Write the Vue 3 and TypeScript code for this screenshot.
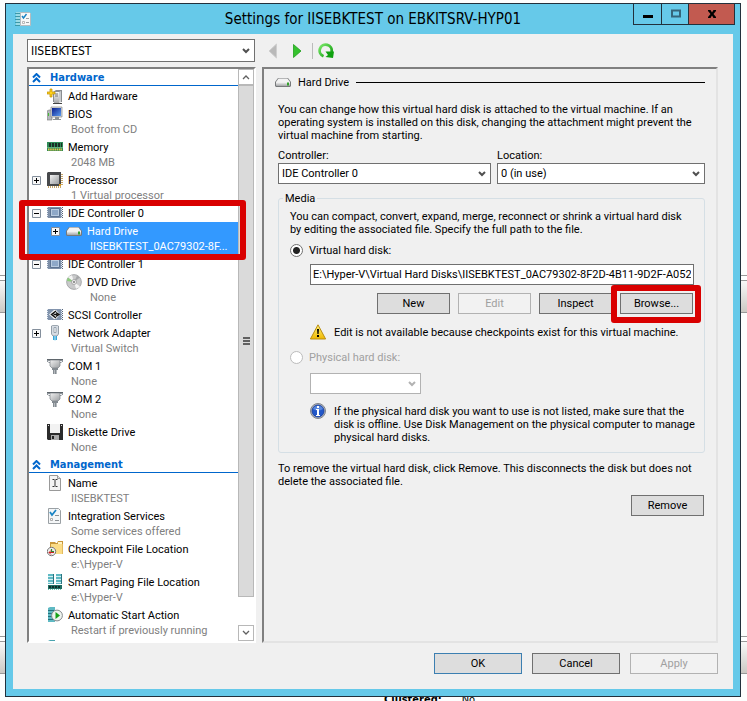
<script setup lang="ts">
import { ref } from 'vue'

interface Item {
  icon: string
  label: string
  note?: string
  expander?: 'plus' | 'minus'
  nested?: boolean
  selected?: boolean
}

interface Section {
  title: string
  items: Item[]
}

const sections: Section[] = [
  {
    title: 'Hardware',
    items: [
      { icon: 'add', label: 'Add Hardware' },
      { icon: 'bios', label: 'BIOS', note: 'Boot from CD' },
      { icon: 'memory', label: 'Memory', note: '2048 MB' },
      { icon: 'cpu', label: 'Processor', note: '1 Virtual processor', expander: 'plus' },
      { icon: 'ide', label: 'IDE Controller 0', expander: 'minus' },
      { icon: 'drive', label: 'Hard Drive', note: 'IISEBKTEST_0AC79302-8F...', expander: 'plus', nested: true, selected: true },
      { icon: 'ide', label: 'IDE Controller 1', expander: 'minus' },
      { icon: 'dvd', label: 'DVD Drive', note: 'None', nested: true },
      { icon: 'scsi', label: 'SCSI Controller' },
      { icon: 'net', label: 'Network Adapter', note: 'Virtual Switch', expander: 'plus' },
      { icon: 'com', label: 'COM 1', note: 'None' },
      { icon: 'com', label: 'COM 2', note: 'None' },
      { icon: 'floppy', label: 'Diskette Drive', note: 'None' },
    ],
  },
  {
    title: 'Management',
    items: [
      { icon: 'name', label: 'Name', note: 'IISEBKTEST' },
      { icon: 'services', label: 'Integration Services', note: 'Some services offered' },
      { icon: 'checkpoint', label: 'Checkpoint File Location', note: 'e:\\Hyper-V' },
      { icon: 'paging', label: 'Smart Paging File Location', note: 'e:\\Hyper-V' },
      { icon: 'start', label: 'Automatic Start Action', note: 'Restart if previously running' },
      { icon: 'stop', label: '' },
    ],
  },
]

const machine = ref('IISEBKTEST')
const controller = ref('IDE Controller 0')
const location = ref('0 (in use)')
const media = ref('virtual')
const path = ref('E:\\Hyper-V\\Virtual Hard Disks\\IISEBKTEST_0AC79302-8F2D-4B11-9D2F-A0521D')
</script>

<template>
  <svg class="sprite" aria-hidden="true">
    <defs>
      <linearGradient id="g-metal" x1="0" y1="0" x2="1" y2="1">
        <stop offset="0" stop-color="#f2f2f2" /><stop offset="1" stop-color="#9a9da0" />
      </linearGradient>
      <linearGradient id="g-down" x1="0" y1="0" x2="0" y2="1">
        <stop offset="0" stop-color="#fafafa" /><stop offset="1" stop-color="#a4a6a8" />
      </linearGradient>
      <linearGradient id="g-green" x1="0" y1="0" x2="1" y2="1">
        <stop offset="0" stop-color="#7be86a" /><stop offset="1" stop-color="#0b9a0b" />
      </linearGradient>
      <linearGradient id="g-blue" x1="0" y1="0" x2="1" y2="1">
        <stop offset="0" stop-color="#0a1d8c" /><stop offset="1" stop-color="#5b9cf0" />
      </linearGradient>
      <linearGradient id="g-yellow" x1="0" y1="0" x2="0" y2="1">
        <stop offset="0" stop-color="#fff27a" /><stop offset="1" stop-color="#f0b800" />
      </linearGradient>
    </defs>
    <symbol id="i-add" viewBox="0 0 16 16">
      <path d="M6 4l3-2h6v12H6z" fill="#8a8d90" /><path d="M7 4h5v11H7z" fill="url(#g-down)" /><path d="M12 4l2-1v11l-2 1z" fill="#c9ccce" />
      <path d="M8 6h3M8 8h3" stroke="#777" /><path d="M6 15.500h9" stroke="#444" />
      <path d="M3 1h2v3h3v2H5v3H3V6H0V4h3z" fill="#ffd21c" stroke="#b98a00" stroke-width=".7" />
    </symbol>
    <symbol id="i-bios" viewBox="0 0 16 16">
      <path d="M0 5l2-1h3v10H0z" fill="#b4b8bb" stroke="#777" stroke-width=".6" /><path d="M1.500 7v3" stroke="#44bb33" />
      <path d="M4 1h11v10H4z" fill="#d9dde0" stroke="#888" stroke-width=".7" /><path d="M5 2h9v8H5z" fill="url(#g-blue)" />
      <path d="M8 11h4v2h2v1H6v-1h2z" fill="#8c9194" />
    </symbol>
    <symbol id="i-memory" viewBox="0 0 16 16">
      <path d="M0 3h16v9H0z" fill="#2e8b57" /><path d="M2 4h2v4H2zM5 4h2v4H5zM8 4h2v4H8zM11 4h2v4h-2zM14 4h1v4h-1z" fill="#1b2e26" />
      <path d="M1 10.500h14" stroke="#e8c34a" stroke-width="2" stroke-dasharray="1.500 .7" /><path d="M0 8.500h16" stroke="#5fb07c" />
    </symbol>
    <symbol id="i-cpu" viewBox="0 0 16 16">
      <path d="M0 1l1-1h13v13l-1 1H0z" fill="#47494c" /><path d="M3 3h9v9H3z" fill="url(#g-metal)" />
      <path d="M15 2v12M1 15h13" stroke="#b58b3a" stroke-width="1.500" stroke-dasharray="1 1" /><path d="M12 12h2v2h-2z" fill="#d99a1e" />
    </symbol>
    <symbol id="i-ide" viewBox="0 0 16 16">
      <path d="M0 2h15v11H0z" fill="#7d8fa8" /><path d="M.5 2v11M14.500 2v11" stroke="#e4eaf2" stroke-dasharray="1 1" />
      <path d="M15.500 2v11" stroke="#55647a" stroke-dasharray="1 1" />
      <path d="M3.500 3.500h9v8h-9z" fill="#b9cbe0" stroke="#5c7392" /><path d="M5 5h6v5H5z" fill="#8ea8c8" />
    </symbol>
    <symbol id="i-drive" viewBox="0 0 16 16">
      <path d="M3 4h10l3 4v4l-1 1H1l-1-1V8z" fill="#77797b" /><path d="M3.500 4.500h9L15 8H1z" fill="#f3f3f3" />
      <path d="M1 8h14v3.500l-.6.500H1.600L1 11.500z" fill="url(#g-down)" /><path d="M12 8.500h2v3h-2z" fill="#33a12c" />
    </symbol>
    <symbol id="i-dvd" viewBox="0 0 16 16">
      <circle cx="8" cy="8" r="7.400" fill="#c9cacb" stroke="#929496" stroke-width=".7" />
      <path d="M8 8L2 3.500A7 7 0 0 1 6 1.200z" fill="#f4f4f4" /><path d="M8 8l6 4.500a7 7 0 0 1-4 2.300z" fill="#f4f4f4" />
      <path d="M8 8L1 7a7 7 0 0 1 1-3.500z" fill="#8ecb7f" /><path d="M8 8l3-6.200a7 7 0 0 1 2.600 2z" fill="#a4a6a8" />
      <circle cx="8" cy="8" r="2.500" fill="#eee" stroke="#888" stroke-width=".6" /><circle cx="8" cy="8" r="1" fill="#777" />
    </symbol>
    <symbol id="i-scsi" viewBox="0 0 16 16">
      <path d="M0 2h15v11H0z" fill="#8294ad" /><path d="M.5 2v11M14.500 2v11" stroke="#e4eaf2" stroke-dasharray="1 1" /><path d="M15.500 2v11" stroke="#55647a" stroke-dasharray="1 1" />
      <path d="M2 7.500L7 3h2l4 4.500L9 12H7z" fill="#f4f6f8" /><path d="M9 4L4.500 7.500 9 11M9 5.500L12 7.500 9 9.500M6.500 7.500h4" fill="none" stroke="#111" stroke-width="1.400" />
    </symbol>
    <symbol id="i-net" viewBox="0 0 16 16">
      <path d="M4.500 1l1-.6h5l1 .6v8l-1.500 2H6L4.500 9z" fill="#d7dde4" stroke="#7e8a96" stroke-width=".8" /><path d="M7 2.500h2v5H7z" fill="#fff" stroke="#8794a1" stroke-width=".8" />
      <path d="M6 11h4v4H6z" fill="#38a5d8" /><path d="M8 11v5" stroke="#bfe8f8" />
    </symbol>
    <symbol id="i-com" viewBox="0 0 16 16">
      <path d="M0 1h16v3h-1l-1 1H2L1 4H0z" fill="#8f969c" /><path d="M3 2h10v6l-2 2H5L3 8z" fill="url(#g-metal)" stroke="#7b8288" stroke-width=".7" />
      <path d="M0 1.500h16" stroke="#5f666c" /><path d="M1 3h2v1H1zM13 3h2v1h-2z" fill="#e8eaec" />
      <path d="M5 10h6v2H5z" fill="#838a90" /><path d="M6 12h4v4H6z" fill="#b5babe" /><path d="M6.500 12v4M8.500 12v4" stroke="#858c92" />
    </symbol>
    <symbol id="i-floppy" viewBox="0 0 16 16">
      <path d="M0 0h16v16H1l-1-1z" fill="#2b2b2b" /><path d="M3 0h10v9H3z" fill="#f2f2f2" /><path d="M4 11h8v5H4z" fill="#a9a9a9" /><path d="M5 12h2v3H5z" fill="#222" />
      <path d="M1 1h1v1H1zM14 1h1v1h-1z" fill="#ddd" />
    </symbol>
    <symbol id="i-name" viewBox="0 0 16 16">
      <path d="M2.500.5h8l3 3v12h-11z" fill="#f4f4f4" stroke="#999" /><path d="M10.500.5v3h3" fill="#ddd" stroke="#999" />
      <path d="M5.500 4.500h2m1 0h2M5.500 11.500h2m1 0h2M8 5v6" stroke="#333" />
    </symbol>
    <symbol id="i-services" viewBox="0 0 16 16">
      <path d="M1.500.5h10l2 2v13h-12z" fill="#f4f6f7" stroke="#9aa0a4" /><path d="M3 4l2 3 4-5" fill="none" stroke="#1783c4" stroke-width="1.700" />
      <path d="M8 7.500h4M8 12.500h4" stroke="#8b9094" /><path d="M3.500 10.500h2v2h-2z" fill="#fff" stroke="#999" stroke-width=".8" />
    </symbol>
    <symbol id="i-checkpoint" viewBox="0 0 16 16">
      <path d="M3 1h5l1 1h1l1-2h5v13H3z" fill="#c9973a" /><path d="M4 3h11.500v10H4z" fill="#fbdc86" /><path d="M11 1h4v2h-4z" fill="#fff3c4" />
      <circle cx="4.500" cy="10.500" r="4.200" fill="#ededed" stroke="#777" /><path d="M4.500 8v2.500H7" fill="none" stroke="#2d8a2d" stroke-width="1.200" /><path d="M2 11.500h5M4 9.500l-2 2 2 2" fill="none" stroke="#c22" />
    </symbol>
    <symbol id="i-paging" viewBox="0 0 16 16">
      <path d="M1 0h5v10H1zM9 0h5v10H9z" fill="#5fb9c3" /><path d="M1 2.500h5M1 5.500h5M1 8.500h5M9 2.500h5M9 5.500h5M9 8.500h5" stroke="#d5f1f4" />
      <path d="M6.500 0v10M14.500 0v10" stroke="#2b7480" /><path d="M1 11h14v4H1z" fill="#1f6d62" /><path d="M2 13h12" stroke="#0d2e2a" stroke-width="2" stroke-dasharray="2 1" /><path d="M1 15.500h14" stroke="#72c8b8" stroke-dasharray="1 1" />
    </symbol>
    <symbol id="i-start" viewBox="0 0 16 16">
      <path d="M1 1l2-1h5v15H1z" fill="#5fb9c3" /><path d="M1 3.500h6M1 6.500h6M1 9.500h6M1 12.500h6" stroke="#24717c" />
      <circle cx="10" cy="8.500" r="5.400" fill="#eef3ee" stroke="#84898c" /><path d="M8.500 5l4.500 3.500L8.500 12z" fill="#16a016" />
    </symbol>
    <symbol id="i-stop" viewBox="0 0 16 16">
      <path d="M1 1l2-1h5v15H1z" fill="#4aa3af" /><path d="M1 3.500h6" stroke="#24717c" />
    </symbol>
  </svg>

  <div class="desktop">
    <div class="backdrop" aria-hidden="true">
      <div class="band"></div>
      <div class="band"></div>
      <div class="under"><b>Clustered:</b><span>No</span></div>
    </div>

    <main class="window">
      <header class="titlebar">
        <svg class="app-icon" viewBox="0 0 16 16">
          <path d="M1 1h5v14H1z" fill="#9adbe6" /><path d="M0 2.500h5M0 5.500h5M0 8.500h5M0 11.500h5M0 14.500h5" stroke="#3c98a8" />
          <path d="M5.500 1.500h9l1 1v12h-10z" fill="#f7f8f8" stroke="#b5bcc0" /><path d="M7 5l1.500 2 3-4" fill="none" stroke="#1783c4" stroke-width="1.400" />
          <path d="M11 7.500h3M11 11.500h3" stroke="#9aa0a4" /><path d="M7.500 10.500h2v2h-2z" fill="#fff" stroke="#aaa" stroke-width=".8" />
        </svg>
        <h1>Settings for IISEBKTEST on EBKITSRV-HYP01</h1>
        <div class="caption">
          <button type="button" class="cap" aria-label="Minimize"><svg viewBox="0 0 10 10"><path d="M0 6h10v3H0z" fill="#000" /></svg></button>
          <button type="button" class="cap" aria-label="Maximize"><svg viewBox="0 0 10 10"><path d="M1 1.500h8v6H1z" fill="none" stroke="#35657a" stroke-width="2" /></svg></button>
          <button type="button" class="cap close" aria-label="Close"><svg viewBox="0 0 10 10"><path d="M1 1h2.500L5 3.500 6.500 1H9v1L6.500 5 9 8v1H6.500L5 6.500 3.500 9H1V8l2.500-3L1 2z" fill="#000" /></svg></button>
        </div>
      </header>

      <div class="client">
        <div class="toolbar">
          <div class="combo machine">
            <select v-model="machine" aria-label="Virtual machine"><option>IISEBKTEST</option></select>
            <svg viewBox="0 0 8 6"><path d="M1 1l3 3 3-3" /></svg>
          </div>
          <button type="button" class="tool" aria-label="Back" disabled><svg viewBox="0 0 16 16"><path d="M11.500 1v14L4 8z" fill="#b9b9b9" stroke="#cfcfcf" /></svg></button>
          <button type="button" class="tool" aria-label="Forward"><svg viewBox="0 0 16 16"><path d="M4.500 1.500v13L12 8z" fill="#35c22d" stroke="#1f9e1c" stroke-width=".8" /></svg></button>
          <span class="split"></span>
          <button type="button" class="tool" aria-label="Refresh"><svg viewBox="0 0 16 16"><path d="M5.500 13.200A6 6 0 1 1 13.500 9" fill="none" stroke="url(#g-green)" stroke-width="2.800" /><path d="M7.500 8.500h8.500l-1 6.500-7.500-1 2.500-2z" fill="#0fa10f" /></svg></button>
        </div>

        <div class="columns">
          <aside class="sidebar">
            <div class="tree">
              <div class="list">
                <section v-for="s in sections" :key="s.title">
                  <h2>
                    <svg viewBox="0 0 9 10"><path d="M1 4.500L4.500 1 8 4.500M1 9l3.500-3.500L8 9" /></svg>
                    {{ s.title }}
                  </h2>
                  <ul>
                    <li v-for="i in s.items" :key="i.label" :class="{ nested: i.nested, selected: i.selected }">
                      <div class="row">
                        <span class="slot">
                          <svg v-if="i.expander" class="exp" viewBox="0 0 9 9">
                            <path d="M.5.5h8v8h-8z" fill="#f8f8f8" stroke="#848f9c" />
                            <path :d="i.expander === 'plus' ? 'M2 4.500h5M4.500 2v5' : 'M2 4.500h5'" stroke="#000" />
                          </svg>
                        </span>
                        <svg class="ico"><use :href="'#i-' + i.icon" /></svg>
                        <span>{{ i.label }}</span>
                      </div>
                      <div v-if="i.note" class="note">{{ i.note }}</div>
                    </li>
                  </ul>
                </section>
              </div>
              <div class="scroll" aria-hidden="true">
                <div class="arrow"><svg viewBox="0 0 8 6"><path d="M1 5l3-3 3 3" /></svg></div>
                <div class="thumb"><i></i><i></i><i></i></div>
                <div class="arrow"><svg viewBox="0 0 8 6"><path d="M1 1l3 3 3-3" /></svg></div>
              </div>
            </div>
            <div class="mark mark-drive"></div>
          </aside>

          <section class="detail">
            <h3>
              <svg class="ico"><use href="#i-drive" /></svg>
              <span>Hard Drive</span>
            </h3>
            <div class="body">
              <p>You can change how this virtual hard disk is attached to the virtual machine. If an<br>operating system is installed on this disk, changing the attachment might prevent the<br>virtual machine from starting.</p>
              <div class="pair">
                <div class="field">
                  <label for="controller">Controller:</label>
                  <div class="combo">
                    <select id="controller" v-model="controller"><option>IDE Controller 0</option></select>
                    <svg viewBox="0 0 8 6"><path d="M1 1l3 3 3-3" /></svg>
                  </div>
                </div>
                <div class="field">
                  <label for="location">Location:</label>
                  <div class="combo">
                    <select id="location" v-model="location"><option>0 (in use)</option></select>
                    <svg viewBox="0 0 8 6"><path d="M1 1l3 3 3-3" /></svg>
                  </div>
                </div>
              </div>

              <fieldset>
                <legend>Media</legend>
                <p>You can compact, convert, expand, merge, reconnect or shrink a virtual hard disk<br>by editing the associated file. Specify the full path to the file.</p>
                <label class="radio"><input v-model="media" type="radio" name="media" value="virtual">Virtual hard disk:</label>
                <div class="inset">
                  <input v-model="path" class="path" type="text" aria-label="Virtual hard disk path">
                  <div class="actions">
                    <button type="button" class="btn">New</button>
                    <button type="button" class="btn" disabled>Edit</button>
                    <button type="button" class="btn">Inspect</button>
                    <span class="marked"><button type="button" class="btn">Browse...</button><span class="mark mark-browse"></span></span>
                  </div>
                  <div class="hint">
                    <svg class="ico" viewBox="0 0 16 16"><path d="M8 .8L15.600 15H.4z" fill="url(#g-yellow)" stroke="#b98d10" stroke-linejoin="round" /><path d="M7 5h2l-.4 5H7.400zM7 11h2v2H7z" fill="#000" /></svg>
                    <p>Edit is not available because checkpoints exist for this virtual machine.</p>
                  </div>
                </div>
                <label class="radio off"><input v-model="media" type="radio" name="media" value="physical" disabled>Physical hard disk:</label>
                <div class="inset">
                  <div class="combo disk">
                    <select aria-label="Physical hard disk" disabled></select>
                    <svg viewBox="0 0 8 6"><path d="M1 1l3 3 3-3" /></svg>
                  </div>
                  <div class="hint">
                    <svg class="ico" viewBox="0 0 16 16"><circle cx="8" cy="8" r="7.500" fill="#b4b8bf" stroke="#7f848c" /><circle cx="8" cy="8" r="6" fill="#2257c8" stroke="#173c9a" stroke-width=".8" /><path d="M3 6a5.500 5.500 0 0 1 10 0q-5 3-10 0z" fill="#7fa8ee" opacity=".6" /><path d="M7 3h2v2H7zM6 6h3v6h1v1H6v-1h1V7H6z" fill="#fff" /></svg>
                    <p>If the physical hard disk you want to use is not listed, make sure that the<br>disk is offline. Use Disk Management on the physical computer to manage<br>physical hard disks.</p>
                  </div>
                </div>
              </fieldset>

              <p class="removal">To remove the virtual hard disk, click Remove. This disconnects the disk but does not<br>delete the associated file.</p>
              <button type="button" class="btn remove">Remove</button>
            </div>
          </section>
        </div>

        <footer>
          <button type="button" class="btn wide default">OK</button>
          <button type="button" class="btn wide">Cancel</button>
          <button type="button" class="btn wide" disabled>Apply</button>
        </footer>
      </div>
    </main>
  </div>
</template>

<style>
body {
  background: #fdfdfd;
}
</style>

<style scoped>
* {
  box-sizing: border-box;
}
.sprite {
  position: absolute;
  width: 0;
  height: 0;
}
.desktop {
  position: relative;
  display: flex;
  flex-direction: column;
  height: 100vh;
  padding: 3px 6px 4px 5px;
  overflow: hidden;
  color: #000;
  font: 11px/13px Roboto, "Noto Sans", sans-serif;
}
.desktop button,
.desktop input,
.desktop select {
  font: inherit;
  color: inherit;
}
h1, h2, h3, p, ul {
  margin: 0;
  padding: 0;
  font-size: inherit;
  font-weight: normal;
}
.backdrop {
  position: absolute;
  inset: 0;
  display: flex;
  flex-direction: column;
  padding-top: 275px;
  gap: 323px;
}
.band {
  flex: none;
  height: 38px;
  border-top: 1px solid #999;
  background: linear-gradient(#fff 0 4px, #999 4px 5px, #f8f8f8 5px, #ccc9c4 36px, #999 36px);
}
.under {
  position: absolute;
  left: 384px;
  top: 693px;
  display: flex;
  gap: 20px;
  font-family: "DejaVu Sans Condensed", "Noto Sans", sans-serif;
}
.window {
  position: relative;
  flex: 1;
  min-height: 0;
  display: flex;
  flex-direction: column;
  padding: 0 7px 7px;
  border: 1px solid #22303c;
  background: #66c9e9;
}
.titlebar {
  position: relative;
  display: flex;
  align-items: center;
  justify-content: center;
  height: 30px;
}
.app-icon {
  position: absolute;
  left: 2px;
  top: 7px;
  width: 16px;
  height: 16px;
}
h1 {
  font: 15px/20px "DejaVu Sans Condensed", "Noto Sans", sans-serif;
}
.caption {
  position: absolute;
  top: -1px;
  right: -2px;
  display: flex;
}
.cap {
  display: grid;
  place-items: center;
  width: 28px;
  height: 22px;
  padding: 0;
  border: 1px solid #22303c;
  border-right: 0;
  background: none;
}
.cap svg {
  width: 10px;
  height: 10px;
}
.cap.close {
  width: 47px;
  margin-left: -1px;
  border-right: 1px solid #22303c;
  background: #c25a50;
}
.client {
  flex: 1;
  min-height: 0;
  display: flex;
  flex-direction: column;
  padding: 5px 15px 15px 14px;
  background: #f0f0f0;
}
.toolbar {
  display: flex;
  align-items: center;
  height: 23px;
}
.combo {
  position: relative;
  height: 21px;
  border: 1px solid #707070;
  background: #fff;
}
.combo select {
  display: block;
  width: 100%;
  height: 100%;
  padding: 0 20px 0 3px;
  border: 0;
  background: none;
  appearance: none;
}
.combo svg {
  position: absolute;
  right: 4px;
  top: 50%;
  width: 8px;
  height: 6px;
  margin-top: -3px;
  fill: none;
  stroke: #505050;
  stroke-width: 2;
  pointer-events: none;
}
.machine {
  width: 228px;
  height: 23px;
}
.machine select {
  font: 12px/16px "DejaVu Sans Condensed", "Noto Sans", sans-serif;
}
.tool {
  width: 16px;
  height: 16px;
  margin-left: 8px;
  padding: 0;
  border: 0;
  background: none;
}
.tool:first-of-type {
  margin-left: 10px;
}
.tool svg {
  display: block;
  width: 16px;
  height: 16px;
}
.split {
  width: 1px;
  height: 16px;
  margin-left: 7px;
  background: #bbb;
}
.split + .tool {
  margin-left: 5px;
}
.columns {
  flex: 1;
  min-height: 0;
  display: flex;
  gap: 6px;
  margin-top: 5px;
}
.sidebar {
  position: relative;
  flex: 0 0 229px;
  display: flex;
}
.tree {
  flex: 1;
  display: flex;
  border: 2px solid;
  border-color: #808080 #fff #fff #808080;
  background: #fff;
  overflow: hidden;
}
.list {
  flex: 1;
  min-width: 0;
  overflow: hidden;
}
h2 {
  display: flex;
  align-items: center;
  gap: 9px;
  height: 17px;
  margin-bottom: 1px;
  padding: 1px 0 0 3px;
  border-bottom: 1px solid #0066cc;
  color: #0066cc;
  font-family: "DejaVu Sans Condensed", "Noto Sans", sans-serif;
  font-weight: bold;
}
h2 svg {
  width: 9px;
  height: 10px;
  fill: none;
  stroke: #0066cc;
  stroke-width: 2;
}
ul {
  list-style: none;
}
.row {
  display: flex;
  align-items: center;
  height: 18px;
  padding-left: 3px;
  white-space: nowrap;
}
.slot {
  width: 15px;
}
.exp {
  display: block;
  width: 9px;
  height: 9px;
}
.ico {
  flex: none;
  display: block;
  width: 16px;
  height: 16px;
}
.row .ico {
  margin-right: 5px;
}
.note {
  height: 15px;
  padding-left: 42px;
  color: #808080;
  white-space: nowrap;
}
.nested .row {
  padding-left: 22px;
}
.nested .note {
  padding-left: 61px;
}
.selected,
.selected .note {
  background: #3399ff;
  color: #fff;
}
.scroll {
  flex: none;
  display: flex;
  flex-direction: column;
  width: 16px;
  background: #fff;
}
.arrow {
  flex: none;
  display: grid;
  place-items: center;
  height: 16px;
  border: 1px solid #b8b8b8;
}
.arrow svg {
  width: 8px;
  height: 6px;
  fill: none;
  stroke: #606060;
  stroke-width: 1.300;
}
.thumb {
  flex: 1;
  display: flex;
  flex-direction: column;
  align-items: center;
  justify-content: center;
  gap: 1px;
  margin-bottom: 28px;
  border: 1px solid #b8b8b8;
  background: #dadada;
}
.thumb i {
  width: 7px;
  height: 2px;
  background: #606060;
}
.mark {
  position: absolute;
  border: 6px solid #d90000;
  border-radius: 3px;
  pointer-events: none;
}
.mark-drive {
  left: -8px;
  top: 133px;
  width: 227px;
  height: 60px;
}
.detail {
  flex: 1;
  min-width: 0;
  padding: 4px 11px;
  border: 2px solid;
  border-color: #808080 #e3e3e3 #e3e3e3 #808080;
}
h3 {
  display: flex;
  align-items: center;
  gap: 7px;
  height: 18px;
}
h3::after {
  content: "";
  flex: 1;
  height: 1px;
  background: #000;
}
.body {
  display: flex;
  flex-direction: column;
  padding: 12px 0 0 3px;
}
.body p {
  white-space: nowrap;
}
.pair {
  display: flex;
  gap: 6px;
  margin: 7px 0 8px;
}
.field {
  flex: 1 1 208px;
}
.field:first-child {
  flex-basis: 213px;
}
.field label {
  display: block;
  height: 14px;
}
fieldset {
  min-width: 0;
  margin: 0;
  padding: 5px 10px 8px 11px;
  border: 1px solid #d5dfe5;
  border-radius: 3px;
}
legend {
  margin-left: -7px;
  padding: 0 2px;
}
.radio {
  display: flex;
  align-items: center;
  gap: 6px;
  height: 14px;
  margin: 7px 0;
}
.radio.off {
  margin: 10px 0 9px;
  color: #a0a0a0;
}
.radio input {
  width: 13px;
  height: 13px;
  margin: 0;
  border: 1px solid #707070;
  border-radius: 50%;
  background: #fff;
  appearance: none;
}
.radio input:checked {
  background: radial-gradient(circle, #222 0 3px, #fff 4px);
}
.radio input:disabled {
  border-color: #bcbcbc;
}
.inset {
  margin-left: 20px;
}
.path {
  display: block;
  width: 100%;
  height: 21px;
  padding: 0 2px;
  border: 1px solid #707070;
  background: #fff;
}
.actions {
  display: flex;
  justify-content: flex-end;
  gap: 8px;
  margin: 8px 1px 10px 0;
}
.btn {
  width: 73px;
  height: 21px;
  padding: 0;
  border: 1px solid #707070;
  background: #dddddd;
}
.btn:disabled {
  border-color: #b2b2b2;
  background: #f2f2f2;
  color: #a0a0a0;
}
.marked {
  position: relative;
  display: flex;
}
.mark-browse {
  inset: -8px -8px -9px -9px;
}
.hint {
  display: flex;
  gap: 8px;
}
.hint p {
  padding-top: 2px;
}
.disk {
  width: 111px;
  margin-bottom: 9px;
  border-color: #b2b2b2;
}
.disk svg {
  stroke: #b2b2b2;
}
.removal {
  margin: 9px 0 7px;
}
.remove {
  align-self: flex-end;
  margin-right: 1px;
}
footer {
  display: flex;
  justify-content: flex-end;
  gap: 10px;
  margin-top: 10px;
}
.wide {
  width: 88px;
}
.default {
  border-color: #3c7fb1;
}
</style>
